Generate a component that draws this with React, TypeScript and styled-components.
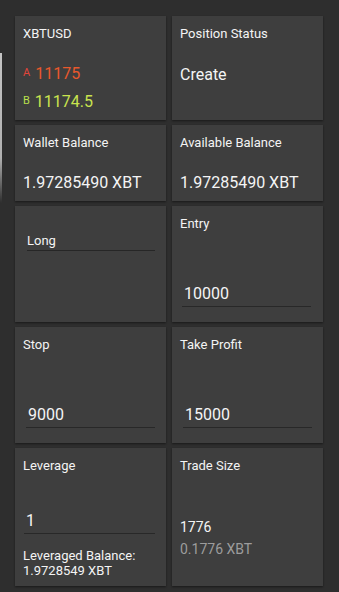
import React from "react";
import styled, { createGlobalStyle } from "styled-components";

const GlobalStyle = createGlobalStyle`
  html, body {
    margin: 0;
    padding: 0;
    background: #2e2e2e;
  }
  body {
    font-family: Roboto, "Noto Sans", "Liberation Sans", sans-serif;
    color: #f2f2f2;
    -webkit-font-smoothing: antialiased;
  }
`;

const Screen = styled.div`
  position: relative;
  width: 339px;
  height: 592px;
  overflow: hidden;
  box-sizing: border-box;
  padding: 16px 0 0 15px;
`;

const EdgeStrip = styled.div`
  position: absolute;
  left: 0;
  top: 53px;
  width: 2px;
  height: 150px;
  background: linear-gradient(#c4c4c4 0%, #b0b0b0 70%, rgba(160, 160, 160, 0) 100%);
`;

const Grid = styled.div`
  display: grid;
  grid-template-columns: 151px 151px;
  grid-template-rows: 104px 76px 116px 116px 138px;
  column-gap: 6px;
  row-gap: 5px;
`;

const Card = styled.div<{ $pb?: number }>`
  display: flex;
  flex-direction: column;
  box-sizing: border-box;
  background: #3e3e3e;
  padding: 10px 8px ${(p) => (p.$pb ?? 10)}px 8px;
  box-shadow: 0 1px 2px rgba(0, 0, 0, 0.45);
`;

const Label = styled.div`
  font-size: 13px;
  line-height: 16px;
  color: #f4f4f4;
`;

const BigValue = styled.div<{ $mt: number }>`
  margin-top: ${(p) => p.$mt}px;
  font-size: 16px;
  line-height: 20px;
  color: #f4f4f4;
`;

const PriceRow = styled.div<{ $mt: number; $color: string }>`
  margin-top: ${(p) => p.$mt}px;
  display: flex;
  align-items: flex-start;
  gap: 5px;
  font-size: 16px;
  line-height: 20px;
  color: ${(p) => p.$color};
`;

const Side = styled.span<{ $color: string }>`
  font-size: 11px;
  line-height: 14px;
  margin-top: 2px;
  color: ${(p) => p.$color};
`;

const Spinner = styled.div`
  margin: 17px 3px 0 4px;
  padding: 0 0 1px 0;
  border-bottom: 1px solid #262626;
  font-size: 13px;
  line-height: 16px;
  color: #f4f4f4;
`;

const Field = styled.div<{ $ml: number; $mr: number }>`
  margin-top: auto;
  margin-left: ${(p) => p.$ml}px;
  margin-right: ${(p) => p.$mr}px;
  padding: 0 0 2px 2px;
  border-bottom: 1px solid #282828;
  font-size: 16px;
  line-height: 20px;
  color: #f4f4f4;
`;

const Note = styled.div<{ $mt: number }>`
  margin-top: ${(p) => p.$mt}px;
  font-size: 13px;
  line-height: 15px;
  color: #f4f4f4;
`;

const Small = styled.div<{ $mt?: number; $muted?: boolean }>`
  margin-top: ${(p) => p.$mt ?? 0}px;
  font-size: 14px;
  line-height: 22px;
  color: ${(p) => (p.$muted ? "#9c9c9c" : "#f4f4f4")};
`;

export default function App() {
  return (
    <>
      <GlobalStyle />
      <Screen>
        <EdgeStrip />
        <Grid>
          <Card>
            <Label>XBTUSD</Label>
            <PriceRow $mt={22} $color="#e8582c">
              <Side $color="#e2453a">A</Side>
              11175
            </PriceRow>
            <PriceRow $mt={8} $color="#c9e34e">
              <Side $color="#b9e04c">B</Side>
              11174.5
            </PriceRow>
          </Card>
          <Card>
            <Label>Position Status</Label>
            <BigValue $mt={23}>Create</BigValue>
          </Card>

          <Card>
            <Label>Wallet Balance</Label>
            <BigValue $mt={22}>1.97285490 XBT</BigValue>
          </Card>
          <Card>
            <Label>Available Balance</Label>
            <BigValue $mt={22}>1.97285490 XBT</BigValue>
          </Card>

          <Card>
            <Spinner>Long</Spinner>
          </Card>
          <Card $pb={15}>
            <Label>Entry</Label>
            <Field $ml={2} $mr={4}>10000</Field>
          </Card>

          <Card $pb={15}>
            <Label>Stop</Label>
            <Field $ml={3} $mr={3}>9000</Field>
          </Card>
          <Card $pb={15}>
            <Label>Take Profit</Label>
            <Field $ml={3} $mr={3}>15000</Field>
          </Card>

          <Card $pb={8}>
            <Label>Leverage</Label>
            <Field $ml={1} $mr={3}>1</Field>
            <Note $mt={14}>
              Leveraged Balance:
              <br />
              1.9728549 XBT
            </Note>
          </Card>
          <Card>
            <Label>Trade Size</Label>
            <Small $mt={42}>1776</Small>
            <Small $muted>0.1776 XBT</Small>
          </Card>
        </Grid>
      </Screen>
    </>
  );
}
